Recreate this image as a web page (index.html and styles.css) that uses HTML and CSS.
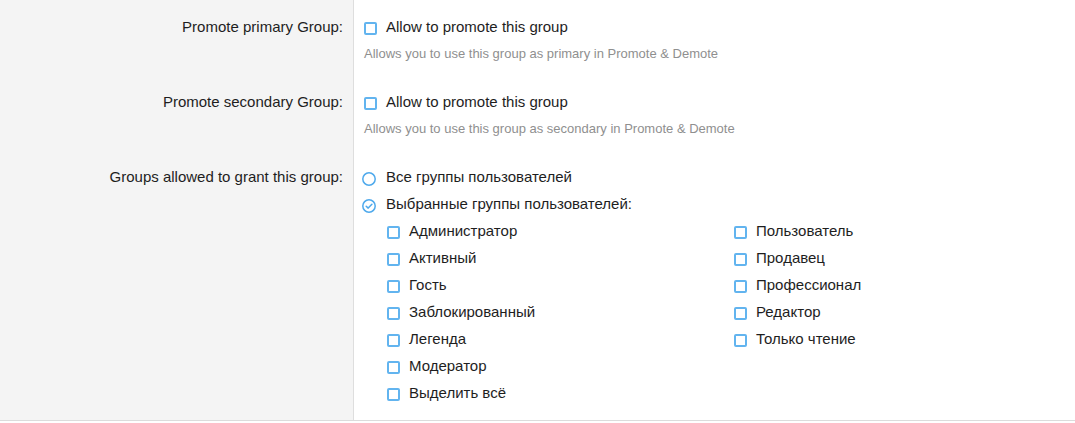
FILE: index.html
```html
<!DOCTYPE html>
<html lang="en">
<head>
<meta charset="utf-8">
<title>Group permissions</title>
<link rel="stylesheet" href="styles.css">
</head>
<body>
<div class="form">
  <dl class="form-row">
    <dt class="row-label">Promote primary Group:</dt>
    <dd class="row-input">
      <label class="choice"><span class="box"></span>Allow to promote this group</label>
      <p class="hint">Allows you to use this group as primary in Promote &amp; Demote</p>
    </dd>
  </dl>
  <dl class="form-row">
    <dt class="row-label">Promote secondary Group:</dt>
    <dd class="row-input">
      <label class="choice"><span class="box"></span>Allow to promote this group</label>
      <p class="hint">Allows you to use this group as secondary in Promote &amp; Demote</p>
    </dd>
  </dl>
  <dl class="form-row form-row-last">
    <dt class="row-label">Groups allowed to grant this group:</dt>
    <dd class="row-input">
      <label class="choice">
        <svg class="radio" viewBox="0 0 14 14" width="14" height="14"><circle cx="7" cy="7" r="6.2" fill="none" stroke="#4ea9ec" stroke-width="1.5"/></svg>Все группы пользователей
      </label>
      <label class="choice">
        <svg class="radio" viewBox="0 0 14 14" width="14" height="14"><circle cx="7" cy="7" r="6.2" fill="none" stroke="#4ea9ec" stroke-width="1.5"/><polyline points="4.2,7.2 6.2,9.1 9.9,5.2" fill="none" stroke="#4ea9ec" stroke-width="1.5" stroke-linecap="round" stroke-linejoin="round"/></svg>Выбранные группы пользователей:
      </label>
      <div class="group-list">
        <ul class="group-col">
          <li class="choice"><span class="box"></span>Администратор</li>
          <li class="choice"><span class="box"></span>Активный</li>
          <li class="choice"><span class="box"></span>Гость</li>
          <li class="choice"><span class="box"></span>Заблокированный</li>
          <li class="choice"><span class="box"></span>Легенда</li>
          <li class="choice"><span class="box"></span>Модератор</li>
          <li class="choice"><span class="box"></span>Выделить всё</li>
        </ul>
        <ul class="group-col">
          <li class="choice"><span class="box"></span>Пользователь</li>
          <li class="choice"><span class="box"></span>Продавец</li>
          <li class="choice"><span class="box"></span>Профессионал</li>
          <li class="choice"><span class="box"></span>Редактор</li>
          <li class="choice"><span class="box"></span>Только чтение</li>
        </ul>
      </div>
    </dd>
  </dl>
</div>
</body>
</html>
```

FILE: styles.css
```css
html, body {
  margin: 0;
  padding: 0;
  background: #fff;
}

body {
  font-family: "Liberation Sans", Arial, sans-serif;
  font-size: 15px;
  color: #1e1e1e;
}

.form {
  border-bottom: 1px solid #dcdcdc;
}

.form-row {
  display: flex;
  margin: 0;
}

.row-label {
  flex: 0 0 354px;
  box-sizing: border-box;
  background: #f4f4f4;
  border-right: 1px solid #dedede;
  padding: 13px 10px 0 0;
  text-align: right;
  line-height: 27px;
}

.row-input {
  flex: 1;
  margin: 0;
  padding: 13px 10px 12px 10px;
}

.form-row-last .row-input {
  padding-bottom: 14px;
}

.choice {
  display: flex;
  align-items: center;
  height: 27px;
  line-height: 27px;
}

.box {
  flex: 0 0 auto;
  box-sizing: border-box;
  width: 13px;
  height: 13px;
  margin: 4px 9px 0 0;
  border: 2px solid #62b4ef;
  border-radius: 2px;
  background: #fff;
}

.radio {
  flex: 0 0 auto;
  margin: 5px 10px 0 -2px;
}

.hint {
  margin: 5px 0 0;
  font-size: 13px;
  line-height: 18px;
  color: #8f8f8f;
}

.group-list {
  display: flex;
  padding-left: 23px;
}

.group-col {
  list-style: none;
  margin: 0;
  padding: 0;
}

.group-col:first-child {
  width: 347px;
}
```
